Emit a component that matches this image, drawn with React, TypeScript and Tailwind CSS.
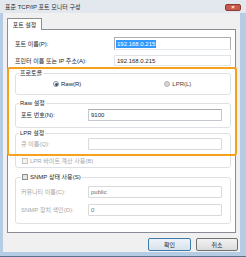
import React from "react";

const font = { fontFamily: "'Liberation Sans','Noto Sans CJK KR',sans-serif" };

function Radio({ checked, label, className }: { checked?: boolean; label: string; className?: string }) {
  return (
    <div className={`flex items-center gap-[2px] ${className ?? ""}`}>
      <span
        className={`w-[6px] h-[6px] rounded-full border flex items-center justify-center ${
          checked ? "border-[#8a9aaa] bg-[#f4f6f8]" : "border-[#b4b4b4] bg-[#d6d6d6]"
        }`}
      >
        {checked && <span className="w-[3px] h-[3px] rounded-full bg-[#37527a]" />}
      </span>
      <span className={checked ? "text-[#1e1e1e]" : "text-[#444]"}>{label}</span>
    </div>
  );
}

function Check({ label, disabled }: { label: string; disabled?: boolean }) {
  return (
    <div className="flex items-center gap-[2px]">
      <span
        className={`w-[6px] h-[6px] border ${
          disabled ? "border-[#c4c4c4] bg-[#f4f4f4]" : "border-[#8e8f8f] bg-[#e6e6e6]"
        }`}
      />
      <span className={disabled ? "text-[#a6a6a6]" : "text-[#1e1e1e]"}>{label}</span>
    </div>
  );
}

function Field({ label, value, disabled }: { label: string; value?: string; disabled?: boolean }) {
  return (
    <div className="flex items-center justify-between">
      <span className={disabled ? "text-[#a6a6a6]" : "text-[#1e1e1e]"}>{label}</span>
      <div
        className={`w-[134px] h-[12px] border rounded-[1px] flex items-center px-[2px] ${
          disabled ? "border-[#d9d9d9] bg-white" : "border-[#c5c9cf] border-t-[#abadb3] bg-white"
        }`}
      >
        <span className={disabled ? "text-[#6d6d6d]" : "text-[#1e1e1e]"}>{value}</span>
      </div>
    </div>
  );
}

export default function App() {
  return (
    <div
      className="w-[246px] h-[257px] bg-[#b6cce4] flex flex-col text-[6px] leading-[8px] relative overflow-hidden border-b border-b-[#5a7290]"
      style={font}
    >
      {/* title bar */}
      <div className="h-[13px] bg-[#e3e8ee] flex items-center justify-between pl-[5px] pr-[5px] shrink-0">
        <span className="text-[#2a2a2a] text-[6px]">표준 TCP/IP 포트 모니터 구성</span>
        <div className="w-[16px] h-[7px] mt-[1px] rounded-[2px] bg-[#c9594c] border border-[#8d3a32] flex items-center justify-center text-white text-[6px] leading-[6px] font-bold">
          ×
        </div>
      </div>

      <div className="flex-1 ml-[3px] mr-[6px] mb-[4px] bg-[#f0f0f0] flex flex-col pl-[4px] pt-[5px]">
        {/* tab */}
        <div className="flex">
          <div className="w-[35px] h-[12px] border border-b-0 border-[#8e8f8f] bg-white flex items-center justify-center text-[#1e1e1e] -mb-px relative z-10">
            포트 설정
          </div>
        </div>

        {/* pane */}
        <div className="w-[229px] h-[204px] border border-[#898c95] bg-white pl-[7px] pr-[4px] pt-[7px] flex flex-col">
          <div className="flex items-center justify-between h-[13px]">
            <span className="text-[#1e1e1e]">포트 이름(P):</span>
            <div className="w-[117px] h-[13px] border border-[#abadb3] border-b-[#e3e9ef] flex items-center px-[1px]">
              <span className="bg-[#3399ff] text-white px-px">192.168.0.215</span>
            </div>
          </div>
          <div className="flex items-center justify-between h-[11px] mt-[5px]">
            <span className="text-[#1e1e1e]">프린터 이름 또는 IP 주소(A):</span>
            <div className="w-[117px] h-[11px] border border-[#e2e3e6] flex items-center px-[2px]">
              <span className="text-[#1e1e1e]">192.168.0.215</span>
            </div>
          </div>

          <fieldset className="border border-[#dde1e5] rounded-[3px] px-[5px] mt-[3px]">
            <legend className="px-[1px] -ml-[2px] text-[#1e1e1e]">프로토콜</legend>
            <div className="flex items-center h-[8px] mt-[3px] mb-[6px]">
              <Radio checked label="Raw(R)" className="ml-[32px]" />
              <Radio label="LPR(L)" className="ml-[83px]" />
            </div>
          </fieldset>

          <fieldset className="border border-[#dde1e5] rounded-[3px] pl-[5px] pr-[8px] mt-[4px]">
            <legend className="px-[1px] -ml-[2px] text-[#1e1e1e]">Raw 설정</legend>
            <div className="mt-[2px] mb-[6px]">
              <Field label="포트 번호(N):" value="9100" />
            </div>
          </fieldset>

          <fieldset className="border border-[#dde1e5] rounded-[3px] pl-[5px] pr-[8px] mt-[1px]">
            <legend className="px-[1px] -ml-[2px] text-[#1e1e1e]">LPR 설정</legend>
            <div className="mt-[1px]">
              <Field label="큐 이름(Q):" disabled />
            </div>
            <div className="h-[8px] mt-[7px] mb-[2px] flex items-center pl-px">
              <Check label="LPR 바이트 계산 사용(B)" disabled />
            </div>
          </fieldset>

          <fieldset className="border border-[#dde1e5] rounded-[3px] pl-[5px] pr-[8px] mt-[5px]">
            <legend className="px-[1px] ml-[0px]">
              <Check label="SNMP 상태 사용(S)" />
            </legend>
            <div className="mt-[5px] flex flex-col gap-[6px] mb-[7px]">
              <Field label="커뮤니티 이름(C):" value="public" disabled />
              <Field label="SNMP 장치 색인(D):" value="0" disabled />
            </div>
          </fieldset>
        </div>

        {/* buttons */}
        <div className="flex justify-end gap-[5px] mt-[5px] pr-[2px]">
          <button className="w-[43px] h-[13px] rounded-[2px] border border-[#3d7bad] bg-gradient-to-b from-[#eef3f8] to-[#d8e2ec] text-[#1e1e1e] text-[6px] leading-[8px]">
            확인
          </button>
          <button className="w-[42px] h-[13px] rounded-[2px] border border-[#707070] bg-gradient-to-b from-[#f2f2f2] to-[#dcdcdc] text-[#1e1e1e] text-[6px] leading-[8px]">
            취소
          </button>
        </div>
      </div>

      {/* orange highlight overlay */}
      <div className="absolute left-[7px] top-[67px] w-[230px] h-[89px] border-2 border-[#f5a11c] rounded-[3px] pointer-events-none" />
    </div>
  );
}
